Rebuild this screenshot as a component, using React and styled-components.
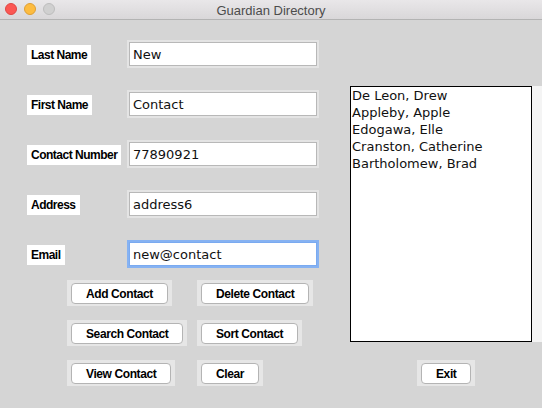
import React from 'react'
import styled, { createGlobalStyle } from 'styled-components'

const GlobalStyle = createGlobalStyle`
  html, body {
    margin: 0;
    padding: 0;
    background: #d5d5d5;
  }
  * { box-sizing: border-box; }
`

// fields shown in the form, top to bottom
const fields = [
  { label: 'Last Name', value: 'New' },
  { label: 'First Name', value: 'Contact' },
  { label: 'Contact Number', value: '77890921' },
  { label: 'Address', value: 'address6' },
  { label: 'Email', value: 'new@contact', focused: true },
]

const contacts = [
  'De Leon, Drew',
  'Appleby, Apple',
  'Edogawa, Elle',
  'Cranston, Catherine',
  'Bartholomew, Brad',
]

const buttons = [
  'Add Contact', 'Delete Contact',
  'Search Contact', 'Sort Contact',
  'View Contact', 'Clear',
]

export default function App() {
  return (
    <Window>
      <GlobalStyle />
      <TitleBar>
        <Lights>
          <Light color="#fc5753" edge="#df4744" />
          <Light color="#fdbc40" edge="#de9f34" />
          <Light color="#d0d0d0" edge="#bdbdbd" />
        </Lights>
        <Title>Guardian Directory</Title>
      </TitleBar>

      <Body>
        <FormColumn>
          <FieldList>
            {fields.map(f => (
              <FieldRow key={f.label}>
                <FieldLabel>{f.label}</FieldLabel>
                <Entry defaultValue={f.value} focused={f.focused} readOnly />
              </FieldRow>
            ))}
          </FieldList>

          <ButtonGrid>
            {buttons.map(b => (
              <ButtonFrame key={b}>
                <Button>{b}</Button>
              </ButtonFrame>
            ))}
          </ButtonGrid>
        </FormColumn>

        <ListColumn>
          <ListHolder>
            <ListBox>
              {contacts.map(c => <ListItem key={c}>{c}</ListItem>)}
            </ListBox>
            <ScrollStrip />
          </ListHolder>
          <ExitRow>
            <ButtonFrame>
              <Button>Exit</Button>
            </ButtonFrame>
          </ExitRow>
        </ListColumn>
      </Body>
    </Window>
  )
}

const Window = styled.div`
  width: 542px;
  height: 408px;
  overflow: hidden;
  background: #d5d5d5;
`

const TitleBar = styled.div`
  position: relative;
  height: 20px;
  display: flex;
  align-items: center;
  justify-content: center;
  background: linear-gradient(#e9e7e9, #d9d7d9);
  border-bottom: 1px solid #b3b3b3;
`

const Lights = styled.div`
  position: absolute;
  left: 5px;
  top: 3px;
  display: flex;
  gap: 7px;
`

const Light = styled.span`
  width: 12px;
  height: 12px;
  border-radius: 50%;
  background: ${p => p.color};
  border: 0.5px solid ${p => p.edge};
`

const Title = styled.div`
  font-family: "Liberation Sans", Arial, sans-serif;
  font-size: 13px;
  color: #4c4c4c;
  margin-top: 1px;
`

const Body = styled.div`
  display: flex;
  height: 388px;
`

const FormColumn = styled.div`
  width: 350px;
  padding: 20px 0 0 27px;
`

const FieldList = styled.div`
  display: flex;
  flex-direction: column;
  gap: 22px;
`

const FieldRow = styled.div`
  display: grid;
  grid-template-columns: 100px 192px;
  align-items: center;
  height: 28px;
`

const FieldLabel = styled.span`
  justify-self: start;
  height: 20px;
  line-height: 20px;
  margin-top: 2px;
  padding: 0 4px;
  background: #fff;
  font-family: "Liberation Sans", Arial, sans-serif;
  font-weight: bold;
  font-size: 12px;
  letter-spacing: -0.5px;
  color: #000;
`

const Entry = styled.input`
  width: 188px;
  height: 24px;
  margin: 2px;
  padding: 0 3px;
  border: 1px solid ${p => (p.focused ? '#7aaaf0' : '#b8b8b8')};
  box-shadow: 0 0 0 2px ${p => (p.focused ? '#86b2f2' : '#e4e4e4')};
  background: #fff;
  font-family: "DejaVu Sans", Verdana, sans-serif;
  font-size: 13px;
  color: #111;
  outline: none;
`

const ButtonGrid = styled.div`
  display: grid;
  grid-template-columns: 130px auto;
  justify-items: start;
  row-gap: 14px;
  margin-top: 12px;
  padding-left: 40px;
`

const ButtonFrame = styled.div`
  padding: 3px 4px 2px;
  background: #e6e6e6;
`

const Button = styled.button`
  display: block;
  height: 21px;
  padding: 0 14px;
  border: 1px solid #b4b4b4;
  border-radius: 4px;
  background: #fff;
  font-family: "Liberation Sans", Arial, sans-serif;
  font-weight: bold;
  font-size: 12px;
  letter-spacing: -0.4px;
  color: #000;
`

const ListColumn = styled.div`
  width: 192px;
  padding-top: 66px;
`

const ListHolder = styled.div`
  display: flex;
  height: 256px;
`

const ListBox = styled.div`
  width: 182px;
  border: 1px solid #000;
  background: #fff;
  padding: 0 1px;
`

const ListItem = styled.div`
  font-family: "DejaVu Sans", Verdana, sans-serif;
  font-size: 13px;
  line-height: 17px;
  color: #111;
  white-space: nowrap;
`

const ScrollStrip = styled.div`
  width: 10px;
  background: #f4f4f4;
`

const ExitRow = styled.div`
  display: flex;
  margin-top: 18px;
  padding-left: 67px;
`
